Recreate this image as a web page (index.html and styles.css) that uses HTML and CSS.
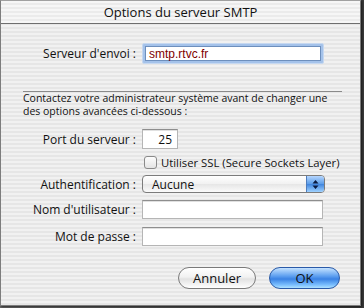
FILE: index.html
```html
<!DOCTYPE html>
<html lang="fr">
<head>
    <meta charset="UTF-8">
    <title>Options du serveur SMTP</title>
    <link rel="stylesheet" href="styles.css">
</head>
<body>
    <div class="window">
        <div class="titlebar">Options du serveur SMTP</div>
        <div class="content">
            <div class="row row-server">
                <label class="label">Serveur d'envoi :</label>
                <div class="focus-ring">
                    <div class="field focused"><span class="value red">smtp.rtvc.fr</span></div>
                </div>
            </div>

            <div class="separator"></div>

            <p class="note">Contactez votre administrateur système avant de changer une des options avancées ci-dessous :</p>

            <div class="row row-port">
                <label class="label">Port du serveur :</label>
                <div class="field small"><span class="value">25</span></div>
            </div>

            <div class="row row-ssl">
                <span class="label"></span>
                <span class="checkbox"></span>
                <span class="check-text">Utiliser SSL (Secure Sockets Layer)</span>
            </div>

            <div class="row row-auth">
                <label class="label">Authentification :</label>
                <div class="popup">
                    <span class="popup-text">Aucune</span>
                    <span class="popup-arrows">
                        <svg width="7" height="11" viewBox="0 0 7 11">
                            <path d="M3.5 1 L6.5 4.5 L0.5 4.5 Z M3.5 10 L6.5 6.5 L0.5 6.5 Z" fill="#0a1a40"/>
                        </svg>
                    </span>
                </div>
            </div>

            <div class="row row-user">
                <label class="label">Nom d'utilisateur :</label>
                <div class="field"></div>
            </div>

            <div class="row row-pass">
                <label class="label">Mot de passe :</label>
                <div class="field"></div>
            </div>

            <div class="buttons">
                <button class="btn cancel">Annuler</button>
                <button class="btn ok">OK</button>
            </div>
        </div>
    </div>
</body>
</html>
```

FILE: styles.css
```css
* {
    box-sizing: border-box;
}

body {
    margin: 0;
    width: 364px;
    height: 308px;
    overflow: hidden;
    background: linear-gradient(to right, #6a6a6a, #3a3a3a);
    font-family: 'Open Sans', 'DejaVu Sans', sans-serif;
    color: #111;
}

.window {
    width: 361px;
    height: 306px;
    border: 1px solid #7d7d7d;
    border-top-color: #a0a0a0;
    background: repeating-linear-gradient(to bottom, #f1f1f1 0 2px, #e6e6e6 2px 4px);
    display: flex;
    flex-direction: column;
    box-shadow: 1px 1px 2px rgba(0, 0, 0, 0.6);
}

.titlebar {
    height: 23px;
    border-bottom: 1px solid #6e6e6e;
    background: repeating-linear-gradient(to bottom, #f6f6f6 0 2px, #ebebeb 2px 4px);
    text-align: center;
    font-size: 13px;
    line-height: 22px;
    color: #111;
}

.content {
    display: flex;
    flex-direction: column;
    font-size: 12px;
}

.row {
    display: flex;
    align-items: center;
}

.label {
    width: 135px;
    flex: none;
    text-align: right;
    margin-right: 6px;
    white-space: nowrap;
}

.field {
    width: 181px;
    height: 19px;
    background: #fff;
    border: 1px solid #b5b5b5;
    border-top-color: #8e8e8e;
    box-shadow: inset 0 1px 0 #e0e0e0;
    display: flex;
    align-items: center;
    padding: 0 4px;
}

.field.small {
    width: 36px;
    height: 20px;
    justify-content: flex-end;
    padding-right: 5px;
}

.focus-ring {
    width: 182px;
    height: 21px;
    padding: 2px;
    border-radius: 2px;
    background: #a4c2ea;
    border: 1px solid #c6d8f0;
}

.field.focused {
    width: 100%;
    height: 100%;
    border: 1px solid #6d8fbd;
    box-shadow: none;
    padding-left: 3px;
}

.red {
    color: #800000;
    font-family: 'Liberation Sans', sans-serif;
    font-size: 12px;
}

.row-server {
    margin-top: 19px;
}

.separator {
    height: 1px;
    background: #8a8a8a;
    margin: 27px 0 0 22px;
    width: 319px;
}

.note {
    margin: 0 0 0 22px;
    font-size: 10.5px;
    line-height: 13px;
    width: 320px;
}

.row-port {
    margin-top: 11px;
}

.row-ssl {
    margin-top: 7px;
    height: 13px;
}

.row-ssl .label {
    margin-right: 8px;
}

.checkbox {
    width: 13px;
    height: 13px;
    border: 1px solid #8a8a8a;
    border-radius: 3px;
    background: linear-gradient(to bottom, #fdfdfd, #e4e4e4);
    margin-right: 4px;
}

.check-text {
    white-space: nowrap;
    font-size: 11.3px;
}

.row-auth {
    margin-top: 6px;
}

.popup {
    width: 183px;
    height: 18px;
    border: 1px solid #7b7b7b;
    border-radius: 4px;
    background: linear-gradient(to bottom, #ffffff, #f1f1f1 50%, #e6e6e6 51%, #fafafa);
    display: flex;
    align-items: center;
    overflow: hidden;
}

.popup-text {
    flex: 1;
    padding-left: 9px;
}

.popup-arrows {
    width: 18px;
    height: 16px;
    background: linear-gradient(to bottom, #b5d6ff, #5a9ce8 50%, #3f84de 51%, #9fd2ff);
    border-left: 1px solid #4e7cbc;
    display: flex;
    align-items: center;
    justify-content: center;
}

.row-user {
    margin-top: 7px;
}

.row-pass {
    margin-top: 8px;
}

.buttons {
    display: flex;
    justify-content: flex-end;
    gap: 13px;
    margin: 21px 20px 0 0;
}

.btn {
    height: 22px;
    border-radius: 11px;
    font-family: 'Open Sans', sans-serif;
    font-size: 13px;
    color: #111;
    padding: 0;
}

.cancel {
    width: 78px;
    border: 1px solid #7a7a7a;
    background: linear-gradient(to bottom, #ffffff, #f2f2f2 45%, #e2e2e2 55%, #ffffff);
}

.ok {
    width: 71px;
    border: 1px solid #2a5aa8;
    background: linear-gradient(to bottom, #c4e2ff, #5fa0f0 40%, #3a82e4 55%, #7cc0ff 85%, #b0e2ff);
}
```
